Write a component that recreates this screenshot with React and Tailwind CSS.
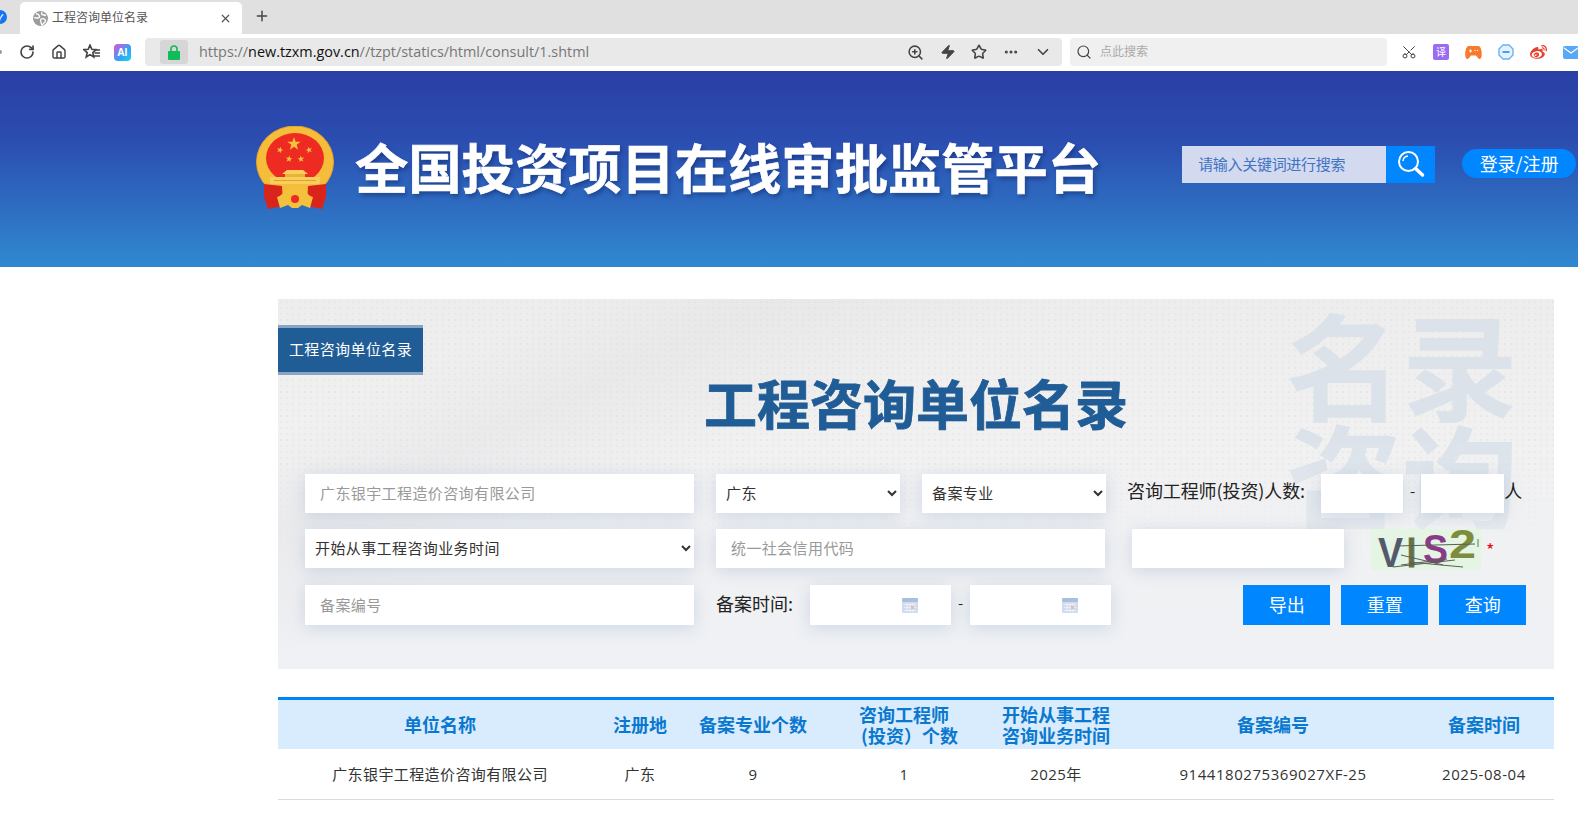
import { ChevronDown, Home, MoreHorizontal, Plus, RotateCw, Scissors, Search, Star, X, Zap, ZoomIn } from 'lucide-react';
import { FaWeibo } from 'react-icons/fa';

const columns = [
  ['单位名称'],
  ['注册地'],
  ['备案专业个数'],
  ['咨询工程师', '(投资）个数'],
  ['开始从事工程', '咨询业务时间'],
  ['备案编号'],
  ['备案时间'],
];

const row = ['广东银宇工程造价咨询有限公司', '广东', '9', '1', '2025年', '9144180275369027XF-25', '2025-08-04'];

const field = 'h-[39px] bg-white px-[15px] pb-[2px] text-[15px] tracking-[0.4px] text-[#333] shadow-[0_3px_16px_rgba(140,165,200,0.35)] outline-none placeholder:text-[#999]';
const selectField = 'h-[39px] bg-white px-[6px] pb-[2px] text-[15px] tracking-[0.4px] text-[#333] shadow-[0_3px_16px_rgba(140,165,200,0.35)] outline-none';

function Emblem() {
  const star = (x, y, r, rot = 0) => {
    const pts = [];
    for (let i = 0; i < 10; i++) {
      const a = (Math.PI / 5) * i - Math.PI / 2 + rot;
      const d = i % 2 === 0 ? r : r * 0.4;
      pts.push(`${x + d * Math.cos(a)},${y + d * Math.sin(a)}`);
    }
    return <polygon key={`${x}-${y}`} points={pts.join(' ')} fill="#f3c13c" />;
  };
  return (
    <svg width="80" height="84" viewBox="0 0 80 84" className="shrink-0">
      <ellipse cx="39" cy="36" rx="38.500" ry="36" fill="#f6bd3a" stroke="#e6a22b" strokeWidth="1" />
      <ellipse cx="39" cy="32" rx="29" ry="25" fill="#ee2b23" />
      {star(38, 18, 7)}
      {star(24, 24, 3.500, 0.3)}
      {star(53, 24, 3.500, -0.3)}
      {star(33, 33, 3.500, 0.15)}
      {star(45, 33, 3.500, -0.15)}
      <path d="M31 44h16l5 4H26z" fill="#f8cf5c" />
      <path d="M29 48h20v3H29z" fill="#e9b33a" />
      <path d="M14 51h50v7H14z" fill="#f8cf5c" />
      <path d="M18 54h42v1H18z" fill="#e0a030" />
      <path d="M8 58 L26 60 L27 80 L12 83 L8 71 Z" fill="#d9241c" />
      <path d="M70 58 L52 60 L51 80 L66 83 L70 71 Z" fill="#d9241c" />
      <path d="M21 71c5-1 8-7 11-8 3 0 4-2 7-2s4 2 7 2c3 1 6 7 11 8l-3 11-8-3-4 3h-6l-4-3-8 3z" fill="#f3c13c" />
      <circle cx="39" cy="73" r="4" fill="#ee2b23" />
    </svg>
  );
}

function Captcha() {
  const font = { fontFamily: 'Liberation Sans', fontWeight: 700, lengthAdjust: 'spacingAndGlyphs' };
  return (
    <svg width="110" height="41" viewBox="0 0 110 41" className="shrink-0 bg-[#e4f5e4]">
      <text x="7" y="38" fontSize="42" fill="#55596e" textLength="25" {...font}>V</text>
      <text x="36" y="38" fontSize="42" fill="#66704a" stroke="#66704a" textLength="9" {...font}>I</text>
      <text x="52" y="34" fontSize="40" fill="#8a3a88" textLength="25" {...font}>S</text>
      <text x="78" y="29" fontSize="40" fill="#7e8c3c" textLength="27" {...font}>2</text>
      <path d="M24 17L104 15M30 26L72 36M22 38L84 31M38 33L92 38M30 36L76 30" stroke="#5b5f55" strokeWidth="1" fill="none" />
      <path d="M107 10v8" stroke="#3c8a4c" strokeWidth="1" />
    </svg>
  );
}

function DateField() {
  return (
    <div className="flex h-[40px] w-[141px] items-center justify-end bg-white pr-[33px] shadow-[0_3px_16px_rgba(140,165,200,0.35)]">
      <svg width="16" height="15" viewBox="0 0 16 15">
        <rect width="16" height="15" rx="1" fill="#cfdcf0" />
        <rect width="16" height="4" rx="1" fill="#a9bfdc" />
        <path d="M2 6.500h12M2 9.500h12M2 12.500h12M5 5v9M8 5v9M11 5v9" stroke="#eef2f8" strokeWidth="0.8" />
        <rect x="9" y="8" width="3" height="3" fill="#eeb9a4" />
      </svg>
    </div>
  );
}

function BrowserChrome() {
  return (
    <div className="h-[71px] bg-white font-['Open_Sans','Noto_Sans_CJK_SC',sans-serif]">
      <div className="flex h-[34px] items-end bg-[#e0e0e0]">
        <div className="-ml-[7px] mb-[10px] mr-[13px] flex h-[14px] w-[14px] items-center justify-center rounded-full bg-[#1476f0] text-[9px] font-bold leading-none text-white">✓</div>
        <div className="flex h-[32px] w-[222px] items-center rounded-t-[5px] bg-white pl-[13px] pr-[10px]">
          <svg width="15" height="15" viewBox="0 0 15 15" className="shrink-0">
            <circle cx="7.500" cy="7.500" r="7.500" fill="#9c9c9c" />
            <path d="M3 2.500c2 .5 3 1 3.500 2.500S5 7 4 7 1.500 6 1 7M9 1c-1 2 0 3 2 3l2 .5M8 8c2-1 4 0 4.500 1.500S10 13 9 14c-1-2-2-4-1-6z" fill="none" stroke="#fff" strokeWidth="1.300" />
          </svg>
          <span className="ml-[4px] text-[12px] text-[#555]">工程咨询单位名录</span>
          <X className="ml-auto h-[13px] w-[13px] text-[#555]" strokeWidth={2.2} />
        </div>
        <Plus className="mb-[10px] ml-[12px] h-[16px] w-[16px] text-[#444]" strokeWidth={2.2} />
      </div>
      <div className="flex h-[36px] items-center">
        <div className="h-[4px] w-[2px] shrink-0 rounded-r-full bg-[#999]" />
        <RotateCw className="ml-[17px] h-[16px] w-[16px] shrink-0 text-[#444]" strokeWidth={2.5} />
        <Home className="ml-[16px] h-[16px] w-[16px] shrink-0 text-[#444]" strokeWidth={2.2} />
        <svg width="18" height="16" viewBox="0 0 18 16" className="ml-[16px] shrink-0 text-[#444]">
          <path d="M7 1l1.800 4.200 4.400.4-3.400 3 1 4.400L7 10.600 3.200 13l1-4.400-3.400-3 4.400-.4z" fill="none" stroke="currentColor" strokeWidth="1.600" />
          <path d="M11 6h6M11.500 9h5.500M10.500 12h6.500" stroke="currentColor" strokeWidth="1.500" />
        </svg>
        <div className="ml-[13px] flex h-[17px] w-[17px] shrink-0 items-center justify-center rounded-[4px] bg-[linear-gradient(135deg,#ec4fd0,#29a6f5_60%,#22d3ee)] text-[10px] font-bold leading-none text-white">AI</div>
        <div className="ml-[14px] flex h-[28px] w-[917px] shrink-0 items-center rounded-[4px] bg-[#e9e9e9] pl-[15px] pr-[10px]">
          <div className="flex h-[24px] w-[28px] items-center justify-center rounded-[3px] bg-[#d6d6d6]">
            <svg width="12" height="15" viewBox="0 0 12 15">
              <path d="M3 7V4a3 3 0 0 1 6 0v3" fill="none" stroke="#0ebd58" strokeWidth="1.600" />
              <rect y="6" width="12" height="9" rx="1" fill="#0ebd58" />
            </svg>
          </div>
          <span className="ml-[11px] text-[14.400px] text-[#777]">https://<span className="text-[#111]">new.tzxm.gov.cn</span>//tzpt/statics/html/consult/1.shtml</span>
          <div className="ml-auto flex items-center gap-[15.500px] text-[#444]">
            <ZoomIn className="h-[17px] w-[17px]" strokeWidth={2.2} />
            <Zap className="h-[16px] w-[16px] fill-[#444]" strokeWidth={1.5} />
            <Star className="h-[16px] w-[16px]" strokeWidth={2.4} />
            <MoreHorizontal className="h-[16px] w-[16px]" strokeWidth={2.6} />
            <ChevronDown className="h-[18px] w-[18px]" strokeWidth={2.2} />
          </div>
        </div>
        <div className="ml-[8px] flex h-[28px] w-[317px] shrink-0 items-center rounded-[4px] bg-[#f0f0f0] pl-[6px]">
          <Search className="h-[16px] w-[16px] text-[#444]" strokeWidth={1.8} />
          <span className="ml-[8px] text-[12px] text-[#aaa]">点此搜索</span>
        </div>
        <div className="ml-[14px] flex shrink-0 items-center gap-[16px]">
          <Scissors className="h-[16px] w-[16px] rotate-[-90deg] text-[#444]" strokeWidth={1.5} />
          <div className="flex h-[16px] w-[16px] items-center justify-center rounded-[2px] bg-[#9a6cf0] text-[10px] leading-none text-white">译</div>
          <svg width="17" height="15" viewBox="0 0 17 15">
            <path d="M4 1h9c2 0 3 2 3.500 5 .5 3 .5 7-1.500 8-1.500.5-2.500-2-4-3.500H6C4.500 12 3.500 14.500 2 14 0 13 0 9 .5 6 1 3 2 1 4 1z" fill="#f97a2a" />
            <path d="M4 6h3M5.500 4.500v3M10 5v1M12.500 5v1" stroke="#fff" strokeWidth="1.200" />
          </svg>
          <svg width="16" height="16" viewBox="0 0 16 16">
            <path d="M5 1h6l4 4v6l-4 4H5l-4-4V5z" fill="#e5f2ff" stroke="#68b2f8" strokeWidth="1.400" />
            <path d="M4.500 8h7" stroke="#4a9df0" strokeWidth="2" />
          </svg>
          <FaWeibo className="h-[17px] w-[17px] text-[#e6412f]" />
          <svg width="16" height="13" viewBox="0 0 16 13" className="shrink-0">
            <rect width="16" height="13" rx="2" fill="#58a8f5" />
            <path d="M1 2l7 5 7-5" fill="none" stroke="#fff" strokeWidth="1.200" />
          </svg>
        </div>
      </div>
    </div>
  );
}

function SiteHeader() {
  return (
    <header className="flex h-[196px] items-center bg-[linear-gradient(180deg,#2a3fa6_0%,#2b4db0_35%,#3089d0_100%)] font-['Noto_Sans_CJK_SC','Liberation_Sans',sans-serif]">
      <div className="mb-[2px] ml-[256px]"><Emblem /></div>
      <h1 className="mb-[6px] ml-[19px] whitespace-nowrap text-[53.300px] font-bold leading-none text-white [-webkit-text-stroke:0.6px_#fff] [text-shadow:2px_3px_4px_rgba(10,30,90,0.45)]">全国投资项目在线审批监管平台</h1>
      <div className="mb-[10px] ml-[81px] flex h-[37px] w-[253px]">
        <div className="flex flex-1 items-center bg-[#d3d9ee] pl-[16px] text-[15px] tracking-[-0.3px] text-[#3f74c4]">请输入关键词进行搜索</div>
        <button type="button" className="flex w-[49px] items-center justify-center bg-[#0086ff]">
          <svg width="28" height="28" viewBox="0 0 28 28" fill="none" stroke="#fff">
            <circle cx="11.500" cy="11.500" r="9.500" strokeWidth="2" />
            <path d="M6 11a5.500 5.500 0 0 1 5-5" strokeWidth="1.500" />
            <path d="M18.500 18.500L25.500 25" strokeWidth="3.500" strokeLinecap="round" />
          </svg>
        </button>
      </div>
      <button type="button" className="mb-[12px] ml-[27px] h-[29px] w-[114px] shrink-0 rounded-full bg-[#0086ff] text-[18px] leading-none text-white">登录/注册</button>
    </header>
  );
}

function SearchPanel() {
  return (
    <section className="relative h-[370px] overflow-hidden bg-[#eef0f3] pt-[26px]">
      <div className="pointer-events-none absolute inset-0 bg-[linear-gradient(180deg,#ededed_0%,#f1f1f2_40%,#eff1f4_100%)]" />
      <div className="pointer-events-none absolute inset-0 bg-[linear-gradient(155deg,transparent_14%,rgba(226,226,228,0.45)_24%,transparent_38%)]" />
      <div className="pointer-events-none absolute inset-0 bg-[radial-gradient(#d8d8d8_1px,transparent_1px)] bg-[length:6px_6px] opacity-25 [mask-image:linear-gradient(180deg,#000_0%,#000_45%,transparent_70%)]" />
      <div className="pointer-events-none absolute right-[34px] top-[6px] w-[234px] text-[116px] font-bold leading-[112px] text-[#dbe2ea] [mask-image:linear-gradient(180deg,#000_60%,rgba(0,0,0,0.5)_100%)]">名录咨询</div>

      <div className="relative">
        <div className="flex h-[50px] w-[145px] items-center justify-center border-y-[3px] border-[#8aa5c2] bg-[#205c96] pb-[2px] text-[15px] tracking-[0.4px] text-white">工程咨询单位名录</div>
        <h2 className="-mt-[6px] ml-[426px] h-[105px] text-[53px] font-bold leading-[66px] text-[#205c96] [-webkit-text-stroke:0.8px_#205c96]">工程咨询单位名录</h2>

        <div className="ml-[27px] flex items-start">
          <input className={`${field} w-[389px]`} placeholder="广东银宇工程造价咨询有限公司" />
          <select className={`${selectField} ml-[22px] w-[184px]`} defaultValue="广东"><option>广东</option></select>
          <select className={`${selectField} ml-[22px] w-[184px]`} defaultValue="备案专业"><option>备案专业</option></select>
          <span className="ml-[21px] text-[18px] leading-[33px] tracking-[-0.1px] text-[#222]">咨询工程师(投资)人数:</span>
          <input className={`${field} ml-[16px] w-[82px]`} />
          <span className="ml-[7px] mr-[6px] text-[15px] leading-[33px] text-[#222]">-</span>
          <input className={`${field} w-[83px]`} />
          <span className="text-[18px] leading-[33px] text-[#222]">人</span>
        </div>

        <div className="ml-[27px] mt-[16px] flex items-start">
          <select className={`${selectField} w-[389px]`} defaultValue="开始从事工程咨询业务时间"><option>开始从事工程咨询业务时间</option></select>
          <input className={`${field} ml-[22px] w-[389px]`} placeholder="统一社会信用代码" />
          <input className={`${field} ml-[27px] w-[212px]`} />
          <div className="ml-[27px]"><Captcha /></div>
          <span className="ml-[5px] mt-[11px] text-[18px] leading-none text-[#e30f0f]">*</span>
        </div>

        <div className="ml-[27px] mt-[15px] flex items-center">
          <input className={`${field} h-[40px] w-[389px]`} placeholder="备案编号" />
          <span className="ml-[22px] pb-[3px] text-[18px] text-[#222]">备案时间:</span>
          <div className="ml-[17px]"><DateField /></div>
          <span className="mx-[7px] pb-[3px] text-[15px] text-[#222]">-</span>
          <DateField />
          <div className="ml-[132px] flex gap-[11px]">
            {['导出', '重置', '查询'].map((label) => (
              <button key={label} type="button" className="h-[40px] w-[87px] bg-[#0086ff] pb-[2px] text-[18px] text-white">{label}</button>
            ))}
          </div>
        </div>
      </div>
    </section>
  );
}

function ResultTable() {
  const grid = 'grid grid-cols-[324px_76px_150px_152px_152px_282px_140px] items-center text-center';
  return (
    <div className="mt-[28px]">
      <div className={`${grid} h-[52px] border-t-[3px] border-[#0083f5] bg-[#d9ecfe] text-[18px] font-bold leading-[21px] text-[#0a78cf]`}>
        {columns.map((lines) => (
          <div key={lines[0]}>
            {lines.map((line) => (
              <div key={line} className={line.startsWith('(') ? 'pl-[11px]' : ''}>{line}</div>
            ))}
          </div>
        ))}
      </div>
      <div className={`${grid} h-[51px] border-b border-[#dcdcdc] font-['Open_Sans','Noto_Sans_CJK_SC',sans-serif] text-[15px] tracking-[0.4px] text-[#333]`}>
        {row.map((cell) => (
          <div key={cell} className={cell.length > 6 && /\d/.test(cell) ? 'tracking-[0.55px]' : ''}>{cell}</div>
        ))}
      </div>
    </div>
  );
}

export default function App() {
  return (
    <div className="h-[827px] w-[1578px] overflow-hidden bg-white">
      <BrowserChrome />
      <SiteHeader />
      <main className="ml-[278px] mt-[32px] w-[1276px] font-['Noto_Sans_CJK_SC','Open_Sans',sans-serif]">
        <SearchPanel />
        <ResultTable />
      </main>
    </div>
  );
}
